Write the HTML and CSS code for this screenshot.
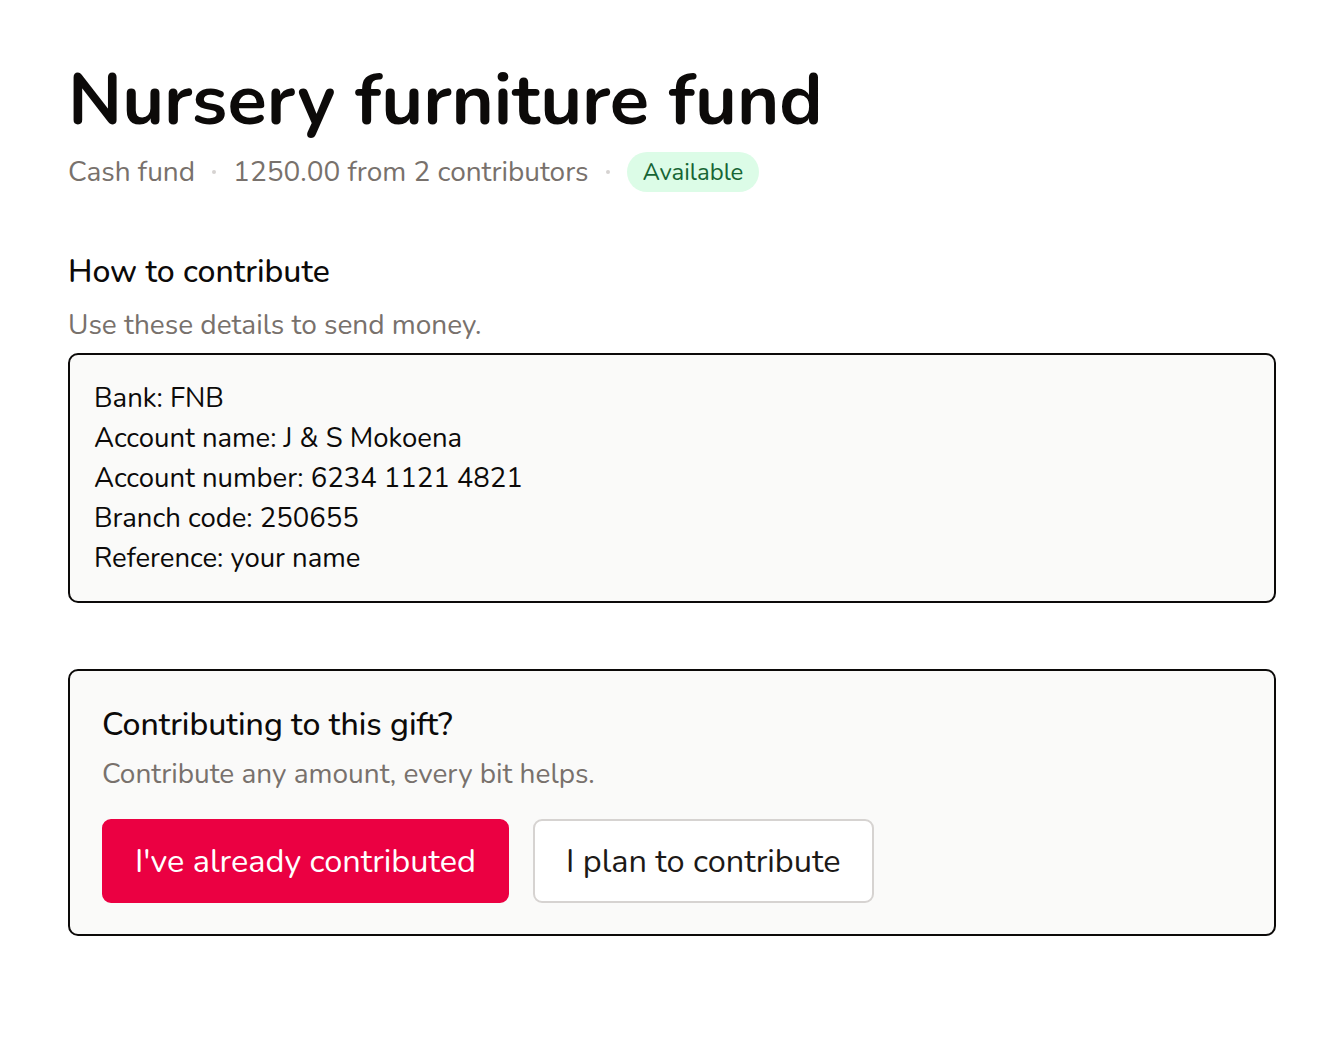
FILE: index.html
```html
<!DOCTYPE html>
<html lang="en">
<head>
<meta charset="utf-8">
<title>Nursery furniture fund</title>
<link rel="stylesheet" href="styles.css">
</head>
<body>
<main class="page">
  <header class="head">
    <h1 class="title">Nursery furniture fund</h1>
    <div class="meta">
      <span>Cash fund</span>
      <span class="dot"></span>
      <span>1250.00 from 2 contributors</span>
      <span class="dot"></span>
      <span class="pill">Available</span>
    </div>
  </header>

  <section class="how">
    <h2 class="how-title">How to contribute</h2>
    <p class="how-sub">Use these details to send money.</p>
    <div class="details">
      <div>Bank: FNB</div>
      <div>Account name: J &amp; S Mokoena</div>
      <div>Account number: 6234 1121 4821</div>
      <div>Branch code: 250655</div>
      <div>Reference: your name</div>
    </div>
  </section>

  <section class="contrib">
    <h3 class="contrib-title">Contributing to this gift?</h3>
    <p class="contrib-sub">Contribute any amount, every bit helps.</p>
    <div class="actions">
      <button class="btn btn-primary">I've already contributed</button>
      <button class="btn btn-secondary">I plan to contribute</button>
    </div>
  </section>
</main>
</body>
</html>
```
FILE: styles.css
```css
* { box-sizing: border-box; }
html, body { margin: 0; padding: 0; background: #ffffff; }
body {
  font-family: "Nunito", "Open Sans", "Noto Sans", sans-serif;
  color: #0c0a09;
}
.page {
  padding: 57px 68px 40px;
  display: flex;
  flex-direction: column;
}
.title {
  margin: 0;
  font-size: 72.4px;
  line-height: 88px;
  font-weight: 700;
}
.meta {
  display: flex;
  align-items: center;
  gap: 17px;
  margin-top: 7px;
  height: 40px;
  font-size: 28px;
  color: #78716c;
}
.dot {
  width: 4px;
  height: 4px;
  border-radius: 50%;
  background: #d6d3d1;
}
.pill {
  background: #dcfce7;
  color: #166534;
  border-radius: 20px;
  padding: 0 16px;
  height: 40px;
  line-height: 40px;
  font-size: 24px;
}
.how { margin-top: 60px; }
.how-title {
  margin: 0;
  font-size: 32px;
  line-height: 40px;
  font-weight: 500;
}
.how-sub {
  margin: 17px 0 0;
  font-size: 28px;
  line-height: 32px;
  color: #78716c;
}
.details {
  margin-top: 12px;
  border: 2px solid #0c0a09;
  border-radius: 10px;
  background: #fafaf9;
  padding: 23px 24px;
  font-size: 27.5px;
  line-height: 40px;
}
.contrib {
  margin-top: 66px;
  border: 2px solid #0c0a09;
  border-radius: 10px;
  background: #fafaf9;
  padding: 32px 32px 31px;
}
.contrib-title {
  margin: 0;
  font-size: 32px;
  line-height: 44px;
  font-weight: 500;
}
.contrib-sub {
  margin: 11px 0 0;
  font-size: 28px;
  line-height: 32px;
  color: #78716c;
}
.actions {
  display: flex;
  gap: 24px;
  margin-top: 29px;
}
.btn {
  font-family: inherit;
  height: 84px;
  padding: 0 31px;
  border-radius: 9px;
  font-size: 32.5px;
  cursor: pointer;
}
.btn-primary {
  background: #eb0042;
  color: #ffffff;
  border: 2px solid #eb0042;
}
.btn-secondary {
  background: #ffffff;
  color: #1c1917;
  border: 2px solid #d6d3d1;
}
```
